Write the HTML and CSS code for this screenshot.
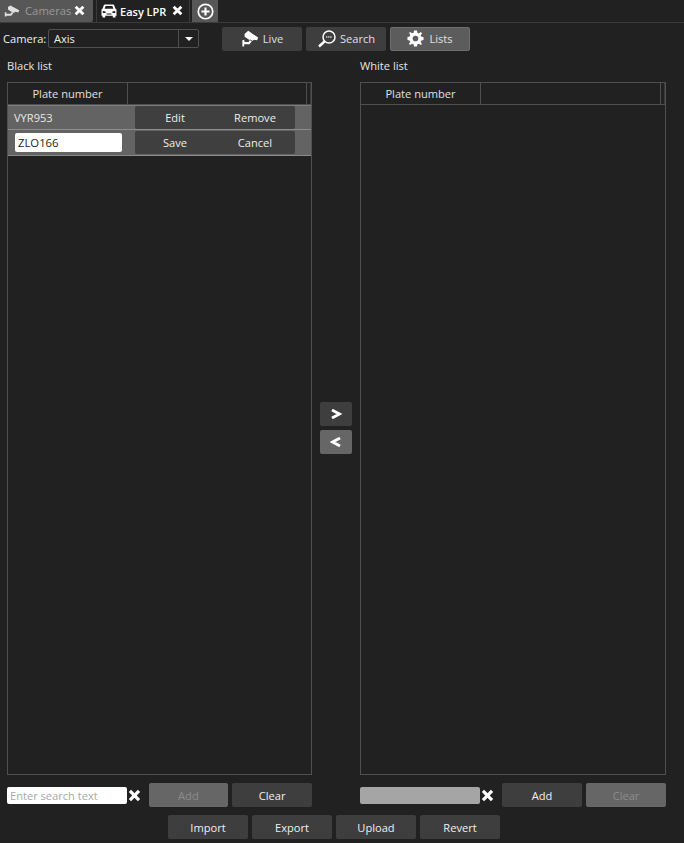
FILE: index.html
```html
<!DOCTYPE html>
<html lang="en">
<head>
<meta charset="utf-8">
<title>Easy LPR</title>
<link rel="stylesheet" href="styles.css">
</head>
<body>
<div class="tabs">
  <div class="tab tab-off">
    <svg class="tab-icon" viewBox="0 0 20 14"><path d="M5 2 L8 0 L19 6 L18 9 L14.5 8 L12 9.5 L9 8 L5 5 Z M10 8 L8 10.5 L3 10.5 L3 8.5 L1 8.5 V14 H3 V12.8 L9 12.8 L12 9.2 Z" fill="#e0e0e0"/></svg>
    <span class="tab-label-off">Cameras</span>
    <svg class="close" viewBox="0 0 10 10"><path d="M1.5 1.5 L8.5 8.5 M8.5 1.5 L1.5 8.5" stroke="#fff" stroke-width="2.6"/></svg>
  </div>
  <div class="tab tab-on">
    <svg class="car-icon" viewBox="0 0 16 14"><path d="M4 0.5 H12 Q13 0.5 13.4 1.8 L14.2 4.2 L15.5 5.5 V11.8 H14.5 V13.5 H11.8 V11.8 H4.2 V13.5 H1.5 V11.8 H0.5 V5.5 L1.8 4.2 L2.6 1.8 Q3 0.5 4 0.5 Z" fill="#fff"/><path d="M4.6 2 H11.4 L12.4 4.8 H3.6 Z" fill="#212121"/><path d="M1.8 7 L4.6 7.6 V9 H1.8 Z M14.2 7 L11.4 7.6 V9 H14.2 Z M5.5 9.6 H10.5 V10.6 H5.5 Z" fill="#212121"/></svg>
    <span class="tab-label-on">Easy LPR</span>
    <svg class="close" viewBox="0 0 10 10"><path d="M1.5 1.5 L8.5 8.5 M8.5 1.5 L1.5 8.5" stroke="#fff" stroke-width="2.6"/></svg>
  </div>
  <div class="tab-add">
    <svg class="add-icon" viewBox="0 0 16 16"><circle cx="8" cy="8" r="6.8" fill="none" stroke="#fff" stroke-width="1.6"/><path d="M8 4.2 V11.8 M4.2 8 H11.8" stroke="#fff" stroke-width="2"/></svg>
  </div>
</div>

<div class="toolbar">
  <span class="camera-label">Camera:</span>
  <div class="select">
    <span class="select-value">Axis</span>
    <span class="select-arrow"><svg class="arrow-icon" viewBox="0 0 8 4"><path d="M0 0 H8 L4 4 Z" fill="#fff"/></svg></span>
  </div>
  <div class="modes">
    <div class="btn mode">
      <svg class="mode-cam" viewBox="0 0 20 18"><path d="M4 4 L8 0.5 L19 8 L18 11 L14.5 10.5 L12 12 L9 10.5 L4 7 Z M10 10 L8.5 13 L4 13 L3.5 10.5 L1.5 11 V18 H3.5 V15.5 L9.5 15.5 L12.5 11.2 Z" fill="#fff"/></svg>
      <span>Live</span>
    </div>
    <div class="btn mode">
      <svg class="mode-search" viewBox="0 0 20 18"><circle cx="12" cy="7" r="6" fill="none" stroke="#fff" stroke-width="1.5"/><path d="M7.5 11.5 L2 16.5" stroke="#fff" stroke-width="2.4"/><path d="M9 7 H15" stroke="#aaa" stroke-width="1.8" stroke-dasharray="1.4 .7"/></svg>
      <span>Search</span>
    </div>
    <div class="btn mode mode-active">
      <svg class="mode-gear" viewBox="0 0 18 18"><path fill="#fff" fill-rule="evenodd" d="M7.4 0.5 H10.6 L11 3 L12.6 3.7 L14.7 2.2 L16 3.5 L14.5 5.6 L15.2 7.2 L17.5 7.4 V10.6 L15.2 11 L14.5 12.6 L15.9 14.7 L14.6 16 L12.6 14.5 L11 15.2 L10.6 17.5 H7.4 L7 15.2 L5.4 14.5 L3.3 15.9 L2 14.6 L3.5 12.6 L2.8 11 L0.5 10.6 V7.4 L2.8 7 L3.5 5.4 L2.1 3.3 L3.4 2 L5.4 3.5 L7 2.8 Z M9 6 A3 3 0 1 0 9 12 A3 3 0 1 0 9 6 Z"/></svg>
      <span>Lists</span>
    </div>
  </div>
</div>

<div class="lists">
  <section class="list">
    <h2 class="list-title">Black list</h2>
    <div class="table">
      <div class="thead">
        <div class="th th-plate">Plate number</div>
        <div class="th th-rest"></div>
        <div class="th-scroll"></div>
      </div>
      <div class="row">
        <div class="cell-plate">VYR953</div>
        <div class="row-actions"><span class="row-btn">Edit</span><span class="row-btn">Remove</span></div>
      </div>
      <div class="row">
        <div class="cell-plate"><span class="plate-input">ZLO166</span></div>
        <div class="row-actions"><span class="row-btn">Save</span><span class="row-btn">Cancel</span></div>
      </div>
    </div>
    <div class="list-foot">
      <span class="search search-on">Enter search text</span>
      <svg class="search-x" viewBox="0 0 12 12"><path d="M1.8 1.8 L10.2 10.2 M10.2 1.8 L1.8 10.2" stroke="#fff" stroke-width="3"/></svg>
      <div class="btn btn-off foot-btn">Add</div>
      <div class="btn foot-btn">Clear</div>
    </div>
  </section>

  <div class="transfer">
    <div class="btn arrow-btn"><svg class="chev" viewBox="0 0 12 10"><path d="M2 1 L9.5 5 L2 9" fill="none" stroke="#fff" stroke-width="2.8"/></svg></div>
    <div class="btn btn-off arrow-btn"><svg class="chev" viewBox="0 0 12 10"><path d="M10 1 L2.5 5 L10 9" fill="none" stroke="#fff" stroke-width="2.8"/></svg></div>
  </div>

  <section class="list">
    <h2 class="list-title">White list</h2>
    <div class="table">
      <div class="thead">
        <div class="th th-plate">Plate number</div>
        <div class="th th-rest"></div>
        <div class="th-scroll"></div>
      </div>
    </div>
    <div class="list-foot">
      <span class="search search-disabled"></span>
      <svg class="search-x" viewBox="0 0 12 12"><path d="M1.8 1.8 L10.2 10.2 M10.2 1.8 L1.8 10.2" stroke="#fff" stroke-width="3"/></svg>
      <div class="btn foot-btn">Add</div>
      <div class="btn btn-off foot-btn">Clear</div>
    </div>
  </section>
</div>

<div class="actions">
  <div class="btn action">Import</div>
  <div class="btn action">Export</div>
  <div class="btn action">Upload</div>
  <div class="btn action">Revert</div>
</div>
</body>
</html>
```

FILE: styles.css
```css
* { box-sizing: border-box; }
html, body { margin: 0; height: 843px; overflow: hidden; }
body {
  width: 684px;
  background: #212121;
  color: #e6e6e6;
  font: 11.1px/16px "Open Sans", "Noto Sans", sans-serif;
}
.tabs {
  display: flex;
  height: 23px;
  border-bottom: 1px solid #3c3c3c;
  align-items: stretch;
}
.tab { display: flex; align-items: center; height: 22px; }
.tab-off { width: 93px; background: #575757; padding-left: 4px; border-radius: 0 0 2px 0; }
.tab-on { width: 94px; margin-left: 3px; padding-left: 4px; border-right: 1px solid #3c3c3c; border-left: 1px solid #3c3c3c; }
.tab-icon { width: 16px; height: 12px; }
.car-icon { width: 16px; height: 14px; }
.tab-label-off { margin-left: 5px; color: #9a9a9a; width: 49px; font-size: 11.3px; }
.tab-label-on { margin-left: 3px; color: #fff; font-weight: 600; width: 52px; font-size: 11px; padding-top: 1px; }
.close { width: 11px; height: 11px; margin-top: -1px; }
.tab-add { width: 26px; height: 22px; margin-left: 2px; background: #575757; display: flex; align-items: center; justify-content: center; }
.add-icon { width: 17px; height: 17px; }

.toolbar { display: flex; align-items: center; height: 31px; padding: 0 0 0 3px; }
.camera-label { width: 45px; color: #f0f0f0; padding-top: 1px; }
.select {
  display: flex;
  width: 151px;
  height: 19px;
  border: 1px solid #505050;
  border-radius: 2px;
  align-items: center;
}
.select-value { flex: 1; padding-left: 5px; color: #f0f0f0; }
.select-arrow { width: 20px; height: 17px; border-left: 1px solid #505050; display: flex; align-items: center; justify-content: center; }
.arrow-icon { width: 8px; height: 4px; }
.modes { display: flex; gap: 4px; margin-left: 23px; }
.btn {
  display: flex;
  align-items: center;
  justify-content: center;
  background: #3e3e3e;
  border-radius: 2px;
  color: #f0f0f0;
  padding-top: 1px;
}
.mode { width: 80px; height: 24px; gap: 4px; color: #e0e0e0; padding-top: 0; }
.mode-active { background: #5c5c5c; border: 1px solid #6e6e6e; }
.mode-cam { width: 18px; height: 17px; }
.mode-search { width: 20px; height: 18px; margin-right: -1px; }
.mode-gear { width: 17px; height: 17px; margin-right: 1px; }

.lists { display: flex; padding-left: 7px; height: 761px; }
.list { display: flex; flex-direction: column; width: 305px; }
.list:last-child { width: 306px; }
.list-title { margin: 0; font-size: 11.1px; font-weight: 400; line-height: 16px; height: 28px; padding-top: 4px; color: #e6e6e6; }
.table { height: 693px; border: 1px solid #505050; }
.thead { display: flex; height: 22px; border-bottom: 1px solid #505050; }
.th { text-align: center; line-height: 22px; }
.th-plate { width: 120px; border-right: 1px solid #505050; color: #e0e0e0; }
.th-rest { flex: 1; }
.th-scroll { width: 5px; border-left: 1px solid #505050; border-right: 1px solid #3a3a3a; }
.row {
  display: flex;
  height: 25px;
  background: #636363;
  border-bottom: 1px solid #8c8c8c;
  border-top: 1px solid #7c7c7c;
  align-items: center;
}
.row + .row { border-top: 0; height: 26px; }
.cell-plate { width: 127px; padding-left: 6px; color: #e8e8e8; }
.plate-input { display: block; width: 107px; height: 19px; background: #fff; color: #222; border-radius: 2px; padding-left: 3px; line-height: 20px; margin-left: 1px; font-size: 11.3px; }
.row-actions { display: flex; width: 160px; height: 23px; background: #3f3f3f; border-radius: 2px; }
.row-btn { flex: 1; text-align: center; line-height: 24px; color: #eee; }

.list-foot { display: flex; align-items: center; height: 24px; margin-top: 8px; }
.search { width: 120px; height: 17px; border-radius: 2px; line-height: 18px; padding-left: 3px; }
.search-on { background: #fff; color: #a8a8a8; }
.search-disabled { background: #a5a5a5; }
.search-x { width: 13px; height: 13px; margin: 0 7px 0 1px; padding: 0; }
.foot-btn { width: 80px; height: 24px; margin-right: 4px; margin-left: 1px; }
.foot-btn:last-child { margin-right: 0; margin-left: 0; }
.btn-off { background: #666; color: #8c8c8c; }

.transfer { width: 48px; display: flex; flex-direction: column; align-items: center; gap: 4px; padding-top: 348px; }
.arrow-btn { width: 32px; height: 24px; padding-top: 0; }
.chev { width: 12px; height: 10px; }

.actions { display: flex; justify-content: center; gap: 4px; margin-left: -16px; height: 24px; }
.action { width: 80px; height: 24px; }
```
